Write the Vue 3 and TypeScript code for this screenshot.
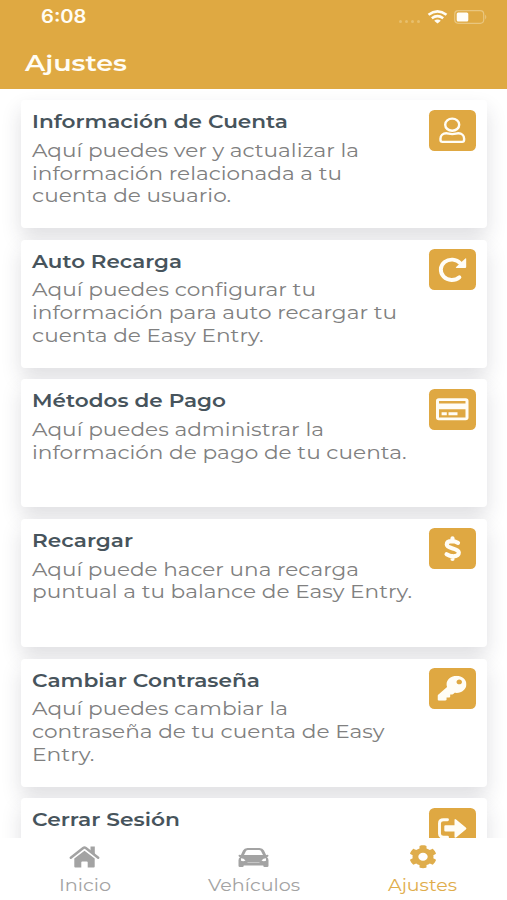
<script setup lang="ts">
import { h } from 'vue'

type Line = { text: string; width: number }
type IconName = 'user' | 'redo' | 'card' | 'dollar' | 'key' | 'exit'
type Setting = { title: Line; icon: IconName; lines: Line[] }
type Tab = { label: Line; icon: 'home' | 'car' | 'cog'; active?: boolean }

// One line of real text, extended to the wide letterform proportions of the interface.
const WideText = (props: { line: Line; baseline: number; height: number }) =>
  h('svg', { class: 'wide-text', width: props.line.width, height: props.height }, [
    h('text', {
      x: 0,
      y: props.baseline,
      textLength: props.line.width,
      lengthAdjust: 'spacingAndGlyphs',
    }, props.line.text),
  ])
WideText.props = ['line', 'baseline', 'height']

const line = (text: string, width: number): Line => ({ text, width })

const settings: Setting[] = [
  {
    title: line('Información de Cuenta', 256), icon: 'user',
    lines: [line('Aquí puedes ver y actualizar la', 327), line('información relacionada a tu', 310), line('cuenta de usuario.', 199)],
  },
  {
    title: line('Auto Recarga', 150), icon: 'redo',
    lines: [line('Aquí puedes configurar tu', 284), line('información para auto recargar tu', 365), line('cuenta de Easy Entry.', 231.5)],
  },
  {
    title: line('Métodos de Pago', 194), icon: 'card',
    lines: [line('Aquí puedes administrar la', 292), line('información de pago de tu cuenta.', 374.5)],
  },
  {
    title: line('Recargar', 101), icon: 'dollar',
    lines: [line('Aquí puede hacer una recarga', 327), line('puntual a tu balance de Easy Entry.', 380)],
  },
  {
    title: line('Cambiar Contraseña', 228), icon: 'key',
    lines: [line('Aquí puedes cambiar la', 256), line('contraseña de tu cuenta de Easy', 352.5), line('Entry.', 62.5)],
  },
  { title: line('Cerrar Sesión', 148), icon: 'exit', lines: [] },
]

const tabs: Tab[] = [
  { label: line('Inicio', 52), icon: 'home' },
  { label: line('Vehículos', 92), icon: 'car' },
  { label: line('Ajustes', 69), icon: 'cog', active: true },
]
</script>

<template>
  <div class="screen">
    <header class="header">
      <div class="status">
        <WideText class="clock" :line="{ text: '6:08', width: 45.5 }" :baseline="17.3" :height="22" />
        <div class="indicators">
          <i class="dots"><b v-for="n in 4" :key="n" /></i>
          <svg class="wifi" width="21" height="14" viewBox="0 0 21 14">
            <path d="M1.5 4.8Q10.5-2 19.5 4.8M4.8 8.2Q10.5 4 16.2 8.2" fill="none" stroke="#fffdf5" stroke-width="2.6" />
            <path d="M7.2 10.7Q10.5 8.3 13.8 10.7L10.5 13.5Z" fill="#fffdf5" />
          </svg>
          <svg class="battery" width="34" height="14" viewBox="0 0 34 14">
            <rect x=".7" y=".7" width="29" height="12.6" rx="3.5" fill="none" stroke="#e9c67e" stroke-width="1.2" />
            <rect x="2.7" y="2.6" width="11.6" height="8.8" rx="1.5" fill="#fffdf8" />
            <path d="M31.3 4.5Q33.2 7 31.3 9.5Z" fill="#edcd8d" />
          </svg>
        </div>
      </div>
      <WideText class="heading" :line="{ text: 'Ajustes', width: 102 }" :baseline="24" :height="32" />
    </header>

    <main class="list">
      <article v-for="item in settings" :key="item.icon" class="card">
        <div class="copy">
          <WideText class="title" :line="item.title" :baseline="20" :height="28" />
          <div class="body">
            <WideText v-for="l in item.lines" :key="l.text" :line="l" :baseline="20" :height="22.75" />
          </div>
        </div>
        <div class="badge">
          <svg width="48" height="41" viewBox="0 0 48 41">
            <g v-if="item.icon === 'user'" fill="none" stroke="#fffdf6" stroke-width="2.4">
              <ellipse cx="23.2" cy="14.7" rx="7" ry="6.1" />
              <path d="M17.3 23.3c2 0 3 .8 6 .8s4-.8 6-.8c3.5 0 5.8 2.2 5.8 5.2v1.6c0 1-.8 1.800-1.900 1.800H13.400c-1.100 0-1.900-.8-1.900-1.800v-1.600c0-3 2.300-5.200 5.800-5.200Z" />
            </g>
            <g v-else-if="item.icon === 'redo'">
              <path d="M31.3 14.3A11 10.2 0 1 0 30.400 28.200" fill="none" stroke="#fffdf6" stroke-width="3.900" stroke-linecap="round" />
              <path d="M36.300 9.500q.9-.6.900.5v8q0 1-1.100 1h-8.600q-1.300 0-.4-.9Z" fill="#fffdf6" />
            </g>
            <g v-else-if="item.icon === 'card'">
              <rect x="7" y="9.300" width="32.500" height="22" rx="2.800" fill="#fffdf6" />
              <path d="M10 12h26.500v2.400H10zM10 20.200h26.500v8.400H10z" fill="#dfa842" />
              <path d="M12.600 23.300h5.200v3h-5.200zM19.500 23.300h9v3h-9z" fill="#fffdf6" />
            </g>
            <g v-else-if="item.icon === 'dollar'" fill="none" stroke="#fffdf6" stroke-width="4.200" stroke-linecap="round">
              <path d="M23.500 10.300v3M23.500 28v3M29 14.800c-2-1-3.800-1.600-6-1.600-3.200 0-5.200 1.200-5.200 3.300 0 4.700 12 3.200 12 8.100 0 2.300-2.200 3.700-5.700 3.700-2.500 0-4.600-.7-6.500-2" />
            </g>
            <svg v-else-if="item.icon === 'key'" x="8.500" y="7.700" width="29" height="25" viewBox="0 0 512 512" preserveAspectRatio="none">
              <path fill="#fffdf6" d="M512 176.001C512 273.203 433.202 352 336 352c-11.220 0-22.190-1.062-32.827-3.069l-24.012 27.014A23.999 23.999 0 0 1 261.223 384H224v40c0 13.255-10.745 24-24 24h-40v40c0 13.255-10.745 24-24 24H24c-13.255 0-24-10.745-24-24v-78.059c0-6.365 2.529-12.470 7.029-16.971l161.802-161.802C163.108 213.814 160 195.271 160 176 160 78.798 238.797.001 335.999 0 433.488-.001 512 78.511 512 176.001zM336 128c0 26.510 21.490 48 48 48s48-21.490 48-48-21.490-48-48-48-48 21.490-48 48z" />
            </svg>
            <g v-else>
              <path d="M18.500 11.700h-4q-4 0-4 3.500v10.500q0 3.500 4 3.500h4" fill="none" stroke="#fffdf6" stroke-width="2.900" stroke-linecap="round" />
              <path d="M16.500 17.200h9v-5q0-1.900 1.600-.8l9.700 8q1.100 1 0 2l-9.700 8q-1.600 1.100-1.600-.8v-5h-9q-1.200 0-1.200-1.100v-4.200q0-1.100 1.200-1.100Z" fill="#fffdf6" />
            </g>
          </svg>
        </div>
      </article>
    </main>

    <nav class="tabs">
      <div v-for="tab in tabs" :key="tab.icon" class="tab" :class="{ active: tab.active }">
        <svg v-if="tab.icon === 'home'" width="31" height="24" viewBox="0 0 31 24" fill="currentColor">
          <path d="M21.500 1.500h4.300v8l-4.300-3.500Z" />
          <path d="M1.800 12.700 14.200 3q1.300-1 2.600 0L29.200 12.700" fill="none" stroke="currentColor" stroke-width="2.500" stroke-linecap="round" />
          <path d="M5.300 13.400 15.500 5.700l10.200 7.700v8.100q0 1-1 1h-6v-5.200q0-.9-.9-.9h-4.600q-.9 0-.9.9v5.200h-6q-1 0-1-1Z" />
        </svg>
        <svg v-else-if="tab.icon === 'car'" width="31" height="24" viewBox="0 0 31 24">
          <path fill="currentColor" fill-rule="evenodd" d="M2.900 10 5 5.500Q6.200 2.900 9.500 2.900h12q3.300 0 4.500 2.600l2.100 4.500 1.400-.3q1 0 1 .9 0 1.200-1.500 1.600 1.500 1.200 1.500 3v5.500q0 1.200-1.300 1.200h-2.700q-1.200 0-1.200-1.200v-.2H5.700v.2q0 1.200-1.200 1.200H1.800Q.5 21.900.5 20.700v-5.500q0-1.800 1.500-3Q.5 11.800.5 10.600q0-.9 1-.9ZM6 10h19l-1.900-3.800Q22.500 5 21 5H10Q8.500 5 7.900 6.200Z" />
          <path d="M3 13.300q2.800 0 4.500 2.300-2.200 1.100-4.500.2ZM28 13.300q-2.800 0-4.500 2.300 2.200 1.100 4.500.2Z" fill="#fff" />
          <path d="M9.500 17.500h12" stroke="#c6c6c6" stroke-width="1" />
        </svg>
        <svg v-else width="28" height="23.500" viewBox="0 0 512 512" preserveAspectRatio="none">
          <path fill="currentColor" d="M487.400 315.700l-42.600-24.600c4.300-23.200 4.300-47 0-70.200l42.600-24.600c4.900-2.800 7.100-8.600 5.500-14-11.100-35.600-30-67.800-54.700-94.600-3.800-4.100-10-5.100-14.800-2.300L380.800 110c-17.900-15.400-38.500-27.300-60.800-35.100V25.800c0-5.600-3.900-10.500-9.400-11.700-36.700-8.200-74.300-7.800-109.200 0-5.500 1.200-9.400 6.100-9.400 11.700V75c-22.200 7.900-42.800 19.800-60.800 35.100L88.700 85.500c-4.900-2.800-11-1.900-14.800 2.300-24.700 26.700-43.600 58.900-54.700 94.600-1.700 5.400.6 11.200 5.500 14L67.300 221c-4.300 23.200-4.300 47 0 70.200l-42.600 24.600c-4.900 2.800-7.100 8.600-5.500 14 11.100 35.600 30 67.800 54.700 94.600 3.800 4.100 10 5.100 14.800 2.300l42.600-24.600c17.900 15.400 38.500 27.300 60.800 35.100v49.200c0 5.600 3.900 10.500 9.400 11.700 36.700 8.200 74.300 7.800 109.200 0 5.500-1.200 9.400-6.100 9.400-11.700v-49.200c22.200-7.900 42.800-19.800 60.800-35.100l42.600 24.600c4.900 2.800 11 1.900 14.800-2.300 24.700-26.700 43.600-58.900 54.700-94.600 1.500-5.500-.7-11.300-5.600-14.100zM256 342c-48 0-86-38-86-86s38-86 86-86 86 38 86 86-38 86-86 86z" />
        </svg>
        <WideText class="label" :line="tab.label" :baseline="15" :height="20" />
      </div>
    </nav>
  </div>
</template>

<style>
body { background: #fff; }
</style>

<style scoped>
.screen {
  display: flex;
  flex-direction: column;
  width: 507px;
  height: 900px;
  overflow: hidden;
  background: #fff;
  font-family: Montserrat, Inter, "Open Sans", sans-serif;
}
svg { display: block; flex: none; }
.wide-text { overflow: visible; fill: currentColor; }
.header {
  flex: none;
  box-sizing: border-box;
  height: 89px;
  padding: 6px 19px 0 25px;
  background: #dfa942;
  color: #fffdf5;
}
.status { display: flex; justify-content: space-between; padding-left: 16px; height: 41px; }
.clock { font-family: Inter, sans-serif; font-size: 18px; font-weight: 600; }
.indicators { display: flex; align-items: flex-start; padding-top: 4px; }
.dots { display: flex; gap: 3px; padding: 10px 7px 0 0; }
.dots b { width: 3px; height: 3px; border-radius: 50%; background: #e7bf6c; }
.battery { margin-left: 6px; }
.heading { font-size: 22.5px; font-weight: 600; }
.list {
  flex: 1;
  min-height: 0;
  overflow: hidden;
  display: flex;
  flex-direction: column;
  gap: 11.6px;
  padding: 11.3px 20px 0 21px;
}
.card {
  flex: none;
  box-sizing: border-box;
  display: flex;
  justify-content: space-between;
  height: 128px;
  padding: 8px 11px 0;
  border-radius: 4px;
  background: #fff;
  box-shadow: 0 10px 20px rgba(40, 42, 60, .15);
}
.title { font-size: 18.5px; font-weight: 600; color: #47545c; }
.body { display: flex; flex-direction: column; margin-top: .5px; font-size: 18px; font-weight: 400; color: #808080; }
.badge {
  flex: none;
  width: 47.5px;
  height: 41px;
  margin-top: 1.3px;
  border-radius: 5.5px;
  background: #dfa842;
  overflow: hidden;
}
.tabs {
  position: relative;
  flex: none;
  display: grid;
  grid-template-columns: repeat(3, 1fr);
  height: 62px;
  background: #fff;
}
.tab { display: flex; flex-direction: column; align-items: center; padding-top: 7px; font-size: 16.5px; color: #a3a3a3; }
.tab .label { margin-top: auto; margin-bottom: 4px; }
.tab.active { color: #dfad4c; }
</style>
